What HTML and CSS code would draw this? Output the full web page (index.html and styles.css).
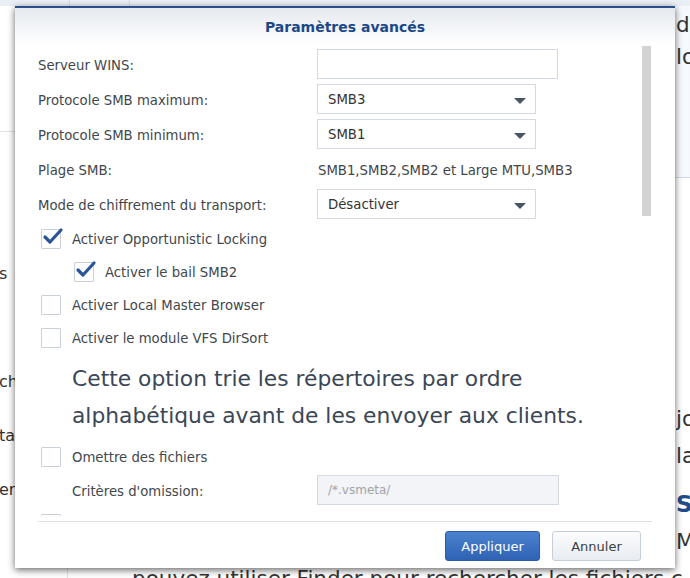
FILE: index.html
```html
<!DOCTYPE html>
<html lang="fr">
<head>
<meta charset="utf-8">
<title>Paramètres avancés</title>
<link rel="stylesheet" href="styles.css">
</head>
<body>
<div class="page">
  <div class="topbar"><span class="tb-cell tb-side"></span><span class="tb-cell tb-gutter"></span><span class="tb-cell"></span></div>
  <div class="layout">
    <aside class="sidebar">
      <div class="side-head"></div>
      <ul class="side-list">
        <li>s</li>
        <li></li>
        <li>ch</li>
        <li>ta</li>
        <li>ern</li>
      </ul>
    </aside>
    <div class="gutter"></div>
    <main class="article">
      <div class="hero">
        <div class="ln"><span class="tail">de</span></div>
        <div class="ln"><span class="tail">lo</span></div>
      </div>
      <div class="body-text">
        <div class="ln"><span class="tail">jo</span></div>
        <div class="ln"><span class="tail">la</span></div>
        <div class="ln heading"><span class="tail">S</span></div>
        <div class="ln p2"><span class="tail">M</span></div>
        <div class="ln full">pouvez utiliser Finder pour rechercher les fichiers c</div>
      </div>
    </main>
  </div>

  <div class="dialog">
    <div class="dlg-header">Paramètres avancés</div>
    <div class="dlg-body">
      <div class="dlg-content">
        <div class="row">
          <span class="label">Serveur WINS:</span>
          <span class="input wide"></span>
        </div>
        <div class="row">
          <span class="label">Protocole SMB maximum:</span>
          <span class="select">SMB3<span class="arrow"></span></span>
        </div>
        <div class="row">
          <span class="label">Protocole SMB minimum:</span>
          <span class="select">SMB1<span class="arrow"></span></span>
        </div>
        <div class="row">
          <span class="label">Plage SMB:</span>
          <span class="value">SMB1,SMB2,SMB2 et Large MTU,SMB3</span>
        </div>
        <div class="row">
          <span class="label">Mode de chiffrement du transport:</span>
          <span class="select">Désactiver<span class="arrow"></span></span>
        </div>

        <div class="check first">
          <span class="box"><svg viewBox="0 0 24 20" width="24" height="20"><path d="M4 10 L9 15 L20 3" fill="none" stroke="#2a5597" stroke-width="3.2" stroke-linecap="round" stroke-linejoin="round"/></svg></span>
          <span class="check-label">Activer Opportunistic Locking</span>
        </div>
        <div class="check indent">
          <span class="box"><svg viewBox="0 0 24 20" width="24" height="20"><path d="M4 10 L9 15 L20 3" fill="none" stroke="#2a5597" stroke-width="3.2" stroke-linecap="round" stroke-linejoin="round"/></svg></span>
          <span class="check-label">Activer le bail SMB2</span>
        </div>
        <div class="check">
          <span class="box"></span>
          <span class="check-label">Activer Local Master Browser</span>
        </div>
        <div class="check">
          <span class="box"></span>
          <span class="check-label">Activer le module VFS DirSort</span>
        </div>

        <p class="tip">Cette option trie les répertoires par ordre<br>alphabétique avant de les envoyer aux clients.</p>

        <div class="check omit">
          <span class="box"></span>
          <span class="check-label">Omettre des fichiers</span>
        </div>
        <div class="row sub">
          <span class="label">Critères d'omission:</span>
          <span class="input wide disabled">/*.vsmeta/</span>
        </div>
        <div class="check next">
          <span class="box"></span>
          <span class="check-label">&nbsp;</span>
        </div>
      </div>
      <div class="scrolltrack"><div class="thumb"></div></div>
    </div>
    <div class="dlg-footer">
      <div class="footer-inner">
        <button class="btn primary">Appliquer</button>
        <button class="btn">Annuler</button>
      </div>
    </div>
  </div>
</div>
</body>
</html>
```

FILE: styles.css
```css
* { box-sizing: border-box; }

html, body {
  margin: 0;
  padding: 0;
}

body {
  width: 690px;
  height: 578px;
  overflow: hidden;
  background: #ffffff;
  font-family: "DejaVu Sans", Verdana, sans-serif;
  color: #333;
}

.page {
  position: relative;
  width: 690px;
  height: 578px;
  overflow: hidden;
}

/* ---------- background page ---------- */
.topbar {
  height: 6px;
  display: grid;
  grid-template-columns: 70px 60px 1fr;
  background: #eaeff5;
}
.tb-side, .tb-gutter { border-right: 1px solid #d4dbe3; }

.layout {
  display: grid;
  grid-template-columns: 68px 62px 1fr;
  height: 572px;
}

.sidebar {
  border-right: 1px solid #e1e4e8;
  overflow: hidden;
}
.side-head {
  height: 126px;
  border-bottom: 1px solid #dfe3e8;
}
.side-list {
  list-style: none;
  margin: 115px 0 0;
  padding: 0;
}
.side-list li {
  height: 54px;
  line-height: 54px;
  font-size: 16px;
  color: #333;
  white-space: nowrap;
  margin-left: -1px;
}

.article {
  overflow: hidden;
}
.hero {
  height: 172px;
  background: #f5f8fc;
  border-bottom: 1px solid #cddcec;
  padding-top: 3px;
}
.ln {
  display: flex;
  font-size: 21.5px;
  line-height: 32px;
  white-space: nowrap;
  color: #333;
}
.ln .tail {
  margin-left: auto;
  width: 14px;
  overflow: hidden;
  white-space: nowrap;
}
.body-text {
  padding-top: 222px;
}
.body-text .ln { line-height: 37px; }
.body-text .heading {
  margin-top: 15px;
  line-height: 30px;
  font-size: 23px;
  font-weight: bold;
  color: #1f4d8c;
}
.body-text .p2 { margin-top: 4px; }
.body-text .full { padding-left: 2px; overflow: hidden; }

/* ---------- dialog ---------- */
.dialog {
  position: absolute;
  left: 15px;
  top: 6px;
  width: 660px;
  height: 562px;
  background: #fff;
  border-top: 2px solid #2b4f8c;
  box-shadow: 0 2px 7px rgba(0, 0, 0, 0.6);
  display: flex;
  flex-direction: column;
}

.dlg-header {
  height: 36px;
  flex: none;
  background: linear-gradient(#e5e9ef, #ffffff);
  text-align: center;
  font-size: 14px;
  font-weight: bold;
  color: #1d4887;
  padding-top: 10px;
  line-height: 18px;
}

.dlg-body {
  height: 472px;
  flex: none;
  display: flex;
  overflow: hidden;
}

.dlg-content {
  flex: 1;
  padding: 5px 0 0 23px;
  font-size: 13.25px;
  color: #42474d;
}

.row {
  display: flex;
  align-items: center;
  height: 30px;
  margin-bottom: 5px;
}
.label {
  width: 279px;
  flex: none;
  padding-top: 2px;
}
.value { padding-top: 3px; padding-left: 1px; }

.input {
  height: 30px;
  border: 1px solid #d3d9e0;
  background: #fff;
}
.input.wide { width: 241px; }
.input.disabled {
  background: #f2f4f7;
  color: #a0a4a8;
  font-size: 12px;
  padding: 7px 0 0 10px;
}

.select {
  position: relative;
  width: 219px;
  height: 30px;
  border: 1px solid #d3d9e0;
  background: #fff;
  padding: 7px 0 0 10px;
  color: #333;
}
.arrow {
  position: absolute;
  right: 9px;
  top: 13px;
  width: 0;
  height: 0;
  border-left: 6px solid transparent;
  border-right: 6px solid transparent;
  border-top: 6px solid #4a5563;
}

.check {
  display: flex;
  align-items: center;
  height: 20px;
  margin-top: 13px;
  margin-left: 3px;
}
.check.first { margin-top: 10px; }
.check.indent { margin-left: 36px; }
.check.omit { margin-top: 13px; }
.check.next { margin-top: 9px; }

.box {
  position: relative;
  width: 20px;
  height: 20px;
  flex: none;
  border: 1px solid #c9d0d8;
  background: #fff;
  border-radius: 1px;
}
.box svg {
  position: absolute;
  left: -1px;
  top: -3px;
}
.check-label {
  margin-left: 11px;
  padding-top: 1px;
}

.tip {
  margin: 12px 0 0 34px;
  font-size: 21.8px;
  line-height: 37px;
  color: #3b4756;
  white-space: nowrap;
}

.row.sub {
  margin-top: 8px;
  margin-bottom: 0;
}
.row.sub .label {
  width: 245px;
  margin-left: 34px;
}
.row.sub .input { width: 242px; }

.scrolltrack {
  width: 9px;
  flex: none;
  margin: 2px 24px 0 0;
}
.thumb {
  height: 170px;
  background: #d3d3d3;
}

.dlg-footer {
  flex: none;
  height: 52px;
  padding: 5px 23px 0;
}
.footer-inner {
  border-top: 1px solid #dfe2e6;
  padding-top: 9px;
  display: flex;
  justify-content: flex-end;
  gap: 12px;
  padding-right: 11px;
}

.btn {
  height: 30px;
  font-family: "DejaVu Sans", Verdana, sans-serif;
  font-size: 13px;
  border-radius: 3px;
  border: 1px solid #c6ced8;
  background: linear-gradient(#fbfcfd, #e8ecf1);
  color: #3a3f45;
  padding: 0;
  width: 89px;
}
.btn.primary {
  width: 95px;
  border-color: #2c5ba6;
  background: linear-gradient(#4b82d0, #2f62b3);
  color: #fff;
}
```
